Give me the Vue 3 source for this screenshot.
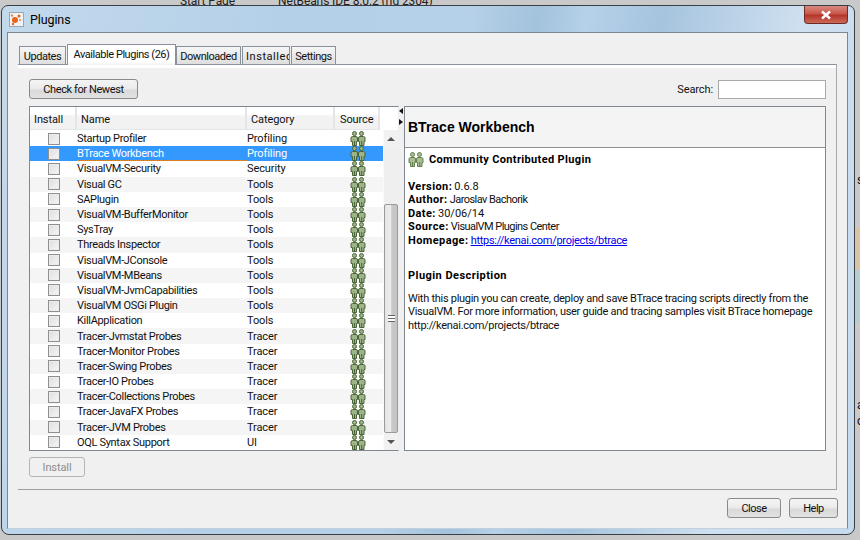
<script setup>
const tabs = [
  { label: 'Updates', width: 47 },
  { label: 'Available Plugins (26)', width: 109, active: true },
  { label: 'Downloaded', width: 65 },
  { label: 'Installed', width: 48, clip: true },
  { label: 'Settings', width: 45 }
]

const plugins = [
  ['Startup Profiler', 'Profiling'],
  ['BTrace Workbench', 'Profiling'],
  ['VisualVM-Security', 'Security'],
  ['Visual GC', 'Tools'],
  ['SAPlugin', 'Tools'],
  ['VisualVM-BufferMonitor', 'Tools'],
  ['SysTray', 'Tools'],
  ['Threads Inspector', 'Tools'],
  ['VisualVM-JConsole', 'Tools'],
  ['VisualVM-MBeans', 'Tools'],
  ['VisualVM-JvmCapabilities', 'Tools'],
  ['VisualVM OSGi Plugin', 'Tools'],
  ['KillApplication', 'Tools'],
  ['Tracer-Jvmstat Probes', 'Tracer'],
  ['Tracer-Monitor Probes', 'Tracer'],
  ['Tracer-Swing Probes', 'Tracer'],
  ['Tracer-IO Probes', 'Tracer'],
  ['Tracer-Collections Probes', 'Tracer'],
  ['Tracer-JavaFX Probes', 'Tracer'],
  ['Tracer-JVM Probes', 'Tracer'],
  ['OQL Syntax Support', 'UI']
]
const SELECTED = 1
</script>

<template>
  <div class="desktop">
    <div class="behind">
      <span class="behind-a">Start Page</span>
      <span class="behind-b">NetBeans IDE 8.0.2 (rid 2304)</span>
      <span class="side s1">s</span>
      <span class="side s2">a</span>
      <span class="side s3">o</span>
      <i class="patch tan"></i>
      <i class="patch blue"></i>
    </div>
    <div class="window">
      <div class="titlebar">
        <svg class="app-icon" width="15" height="15" viewBox="0 0 15 15">
          <rect x="0.5" y="0.5" width="14" height="14" fill="#eef2f5" stroke="#9aa7b3" />
          <circle cx="6" cy="8" r="3" fill="#e8641b" />
          <circle cx="10" cy="4" r="1.5" fill="#e8641b" />
          <circle cx="3" cy="3.5" r="1.2" fill="#eb8a4d" />
          <circle cx="4" cy="12" r="1.2" fill="#e8641b" />
          <circle cx="11" cy="8" r="1" fill="#eb8a4d" />
        </svg>
        <span class="title">Plugins</span>
        <div class="close-x">
          <svg width="12" height="10" viewBox="0 0 12 10">
            <path d="M2 1.5 L10 8.5 M10 1.5 L2 8.5" stroke="#fff" stroke-width="2.4" />
          </svg>
        </div>
      </div>

      <div class="client">
        <div class="tabs">
          <div
            v-for="tab in tabs"
            :key="tab.label"
            class="tab"
            :class="{ active: tab.active, clip: tab.clip }"
            :style="{ width: tab.width + 'px' }"
          >{{ tab.label }}</div>
        </div>

        <div class="tab-panel">
          <div class="toolbar">
            <button class="btn newest">Check for Newest</button>
            <div class="search">
              <span>Search:</span>
              <div class="search-box"></div>
            </div>
          </div>

          <div class="split">
            <div class="table">
              <div class="table-head">
                <div class="th th-install">Install</div>
                <div class="th th-name">Name</div>
                <div class="th th-cat">Category</div>
                <div class="th th-src">Source</div>
              </div>
              <div class="table-body">
                <div class="rows">
                  <div
                    v-for="(p, i) in plugins"
                    :key="p[0]"
                    class="row"
                    :class="{ selected: i === SELECTED }"
                  >
                    <div class="td-install"><span class="check"></span></div>
                    <div class="td-name">{{ p[0] }}</div>
                    <div class="td-cat">{{ p[1] }}</div>
                    <div class="td-src">
                      <svg width="16" height="15" viewBox="0 0 16 15">
                        <g fill="#9db38a" stroke="#4a6636" stroke-width="1">
                          <circle cx="4.5" cy="2.5" r="2" />
                          <path d="M1 7 Q1 5.5 2.5 5.5 H6 Q7.5 5.5 7.5 7 V10.5 H6.5 V14.5 H2.5 V10.5 H1 Z" />
                          <path d="M4.5 10 V14.5" fill="none" />
                          <circle cx="11.5" cy="2.5" r="2" />
                          <path d="M8.5 7 Q8.5 5.5 10 5.5 H13.5 Q15 5.5 15 7 V10.5 H14 V14.5 H9.5 V10.5 H8.5 Z" />
                          <path d="M11.7 10 V14.5" fill="none" />
                        </g>
                      </svg>
                    </div>
                  </div>
                </div>
                <div class="scrollbar">
                  <div class="arrow up"></div>
                  <div class="track">
                    <div class="thumb"><span class="grip"></span></div>
                  </div>
                  <div class="arrow down"></div>
                </div>
              </div>
            </div>

            <div class="divider">
              <span class="tri left"></span>
              <span class="tri right"></span>
            </div>

            <div class="detail">
              <div class="detail-head">BTrace Workbench</div>
              <div class="detail-body">
                <div class="community">
                  <svg width="16" height="15" viewBox="0 0 16 15">
                    <g fill="#a9bd96" stroke="#64804d" stroke-width="1">
                      <circle cx="4.5" cy="2.5" r="2" />
                      <path d="M1 7 Q1 5.5 2.5 5.5 H6 Q7.5 5.5 7.5 7 V10.5 H6.5 V14.5 H2.5 V10.5 H1 Z" />
                      <path d="M4.5 10 V14.5" fill="none" />
                      <circle cx="11.5" cy="2.5" r="2" />
                      <path d="M8.5 7 Q8.5 5.5 10 5.5 H13.5 Q15 5.5 15 7 V10.5 H14 V14.5 H9.5 V10.5 H8.5 Z" />
                      <path d="M11.7 10 V14.5" fill="none" />
                    </g>
                  </svg>
                  <b>Community Contributed Plugin</b>
                </div>
                <div class="meta">
                  <div><b>Version:</b> <span class="num">0.6.8</span></div>
                  <div><b>Author:</b> Jaroslav Bachorik</div>
                  <div><b>Date:</b> <span class="num">30/06/14</span></div>
                  <div><b>Source:</b> VisualVM Plugins Center</div>
                  <div><b>Homepage:</b> <a class="link">https://kenai.com/projects/btrace</a></div>
                </div>
                <div class="desc-title">Plugin Description</div>
                <p class="desc">With this plugin you can create, deploy and save BTrace tracing scripts directly from the<br>VisualVM. For more information, user guide and tracing samples visit BTrace homepage<br>http://kenai.com/projects/btrace</p>
              </div>
            </div>
          </div>

          <div class="install-line">
            <button class="btn install" disabled>Install</button>
          </div>
        </div>

        <div class="footer">
          <button class="btn foot">Close</button>
          <button class="btn foot">Help</button>
        </div>
      </div>
    </div>
  </div>
</template>

<style scoped>
.desktop {
  position: relative;
  width: 860px;
  height: 540px;
  box-sizing: border-box;
  padding: 5px 5px 5px 1px;
  overflow: hidden;
  background: #c9c9c9;
  font-family: Roboto, "Liberation Sans", Arial, sans-serif;
  font-size: 11px;
  letter-spacing: -0.1px;
  color: #111;
}

.behind {
  position: absolute;
  left: 0;
  top: -6px;
  font-size: 12px;
  color: #222;
}

.behind-a {
  position: absolute;
  left: 180px;
  white-space: nowrap;
}

.behind-b {
  position: absolute;
  left: 278px;
  white-space: nowrap;
}

.side {
  position: absolute;
  left: 857px;
  color: #111;
}

.s1 { top: 179px; }
.s2 { top: 404px; }
.s3 { top: 420px; }

.patch {
  position: absolute;
  left: 856px;
  width: 4px;
}

.tan {
  top: 233px;
  height: 43px;
  background: #d8c4a6;
}

.blue {
  top: 276px;
  height: 53px;
  background: #b7cdd3;
}

.window {
  position: relative;
  height: 530px;
  box-sizing: border-box;
  padding: 0 6px 5px 5px;
  border: 1px solid #3a3f45;
  border-radius: 7px 7px 8px 8px;
  background: linear-gradient(100deg, #c3d9ec 0%, #b4d0e8 30%, #b5d0e8 50%, #a3c2dc 57%, #b6d1ea 62%, #a6c4de 70%, #cfe0f0 85%, #c4daee 100%);
  display: flex;
  flex-direction: column;
}

.titlebar {
  height: 26px;
  flex: none;
  display: flex;
  align-items: center;
  gap: 6px;
  padding-left: 2px;
  position: relative;
}

.app-icon {
  margin-top: 1px;
}

.title {
  font-size: 12.5px;
  color: #000;
}

.close-x {
  position: absolute;
  right: 0;
  top: 0;
  width: 44px;
  height: 18px;
  box-sizing: border-box;
  border: 1px solid #6e2b25;
  border-top: none;
  border-radius: 0 0 4px 4px;
  background: linear-gradient(#d88b80 0%, #c9574a 45%, #b5362a 55%, #cb6a58 100%);
  display: flex;
  align-items: center;
  justify-content: center;
}

.client {
  flex: 1;
  box-sizing: border-box;
  background: #f0f0f0;
  border: 1px solid #7c8794;
  border-bottom-color: #c0d0de;
  padding: 11px 10px 0 10px;
  display: flex;
  flex-direction: column;
}

.tabs {
  display: flex;
  align-items: flex-end;
  height: 20px;
  flex: none;
  padding-left: 1px;
  position: relative;
  z-index: 1;
}

.tab {
  height: 18px;
  box-sizing: border-box;
  border: 1px solid #8a919b;
  border-bottom: none;
  background: linear-gradient(#f6f6f6, #dedede);
  text-align: center;
  line-height: 19px;
  letter-spacing: -0.45px;
  white-space: nowrap;
  overflow: hidden;
  margin-right: 1px;
}

.tab.clip {
  text-align: left;
  padding-left: 3px;
  letter-spacing: 0.55px;
}

.tab.active {
  height: 21px;
  line-height: 19px;
  margin-right: 0;
  margin-bottom: -1px;
  background: linear-gradient(#fff 0, #fff 85%, #f0f0f0 100%);
}

.tab-panel {
  height: 426px;
  flex: none;
  box-sizing: border-box;
  background: #f0f0f0;
  border-top: 1px solid #8a919b;
  border-right: 1px solid #a5a9ae;
  border-bottom: 1px solid #9ca0a5;
  box-shadow: inset 0 3px 0 #fff;
  padding: 14px 10px 0 11px;
  display: flex;
  flex-direction: column;
}

.toolbar {
  display: flex;
  justify-content: space-between;
  align-items: center;
  height: 20px;
  flex: none;
  margin-bottom: 7px;
}

.btn {
  font: inherit;
  letter-spacing: inherit;
  color: #111;
  box-sizing: border-box;
  border: 1px solid #8a8a8a;
  border-radius: 3px;
  background: linear-gradient(#f4f4f4 0%, #ececec 45%, #d9d9d9 60%, #e2e2e2 100%);
  padding: 0;
}

.newest {
  width: 109px;
  height: 20px;
  letter-spacing: -0.4px;
}

.search {
  display: flex;
  align-items: center;
  gap: 5px;
}

.search-box {
  width: 108px;
  height: 19px;
  box-sizing: border-box;
  background: #fff;
  border: 1px solid #a9a9a9;
}

.split {
  display: flex;
  height: 345px;
  flex: none;
}

.table {
  width: 370px;
  flex: none;
  box-sizing: border-box;
  border: 1px solid #7f8790;
  border-right: 1px solid #eee;
  background: #fff;
  display: flex;
  flex-direction: column;
}

.table-head {
  display: flex;
  height: 23px;
  flex: none;
  width: 350px;
  background: linear-gradient(#fff 0, #fff 30%, #f3f3f3 40%, #f1f1f1 100%);
}

.th {
  box-sizing: border-box;
  line-height: 25px;
  border-right: 2px solid #e3e5e8;
  border-bottom: 1px solid #e3e5e8;
}

.th-install { width: 47px; padding-left: 4px; }
.th-name { width: 170px; padding-left: 4px; }
.th-cat { width: 88px; padding-left: 4px; }
.th-src { width: 45px; padding-left: 5px; }

.table-body {
  flex: 1;
  display: flex;
  min-height: 0;
  overflow: hidden;
}

.rows {
  width: 353px;
  flex: none;
  overflow: hidden;
  padding-top: 1px;
}

.row {
  display: flex;
  align-items: center;
  height: 15.2px;
}

.row:nth-child(even) {
  background: #f5f5f5;
}

.row.selected,
.row.selected:nth-child(even) {
  background: #3399ff;
  color: #fff;
}

.td-install {
  width: 48px;
  flex: none;
  display: flex;
  justify-content: center;
}

.check {
  width: 12px;
  height: 12px;
  box-sizing: border-box;
  border: 1px solid #8f8f8f;
  background: linear-gradient(135deg, #ddd, #f7f7f7);
  box-shadow: inset 0 0 0 1px #ececec;
}

.td-name {
  width: 170px;
  flex: none;
  box-sizing: border-box;
  margin-left: -1px;
  white-space: nowrap;
  letter-spacing: -0.32px;
}

.selected .td-name {
  align-self: stretch;
  line-height: 15px;
  border-bottom: 1px dotted #e08a2a;
}

.td-cat {
  width: 88px;
  flex: none;
}

.td-src {
  width: 46px;
  flex: none;
  display: flex;
  justify-content: center;
  height: 15px;
}

.scrollbar {
  flex: 1;
  background: #f1f1f1;
  display: flex;
  flex-direction: column;
  border-left: 1px solid #fafafa;
}

.arrow {
  height: 17px;
  flex: none;
  display: flex;
  align-items: center;
  justify-content: center;
}

.arrow::after {
  content: "";
  border-left: 4px solid transparent;
  border-right: 4px solid transparent;
}

.arrow.up::after {
  border-bottom: 4px solid #555;
}

.arrow.down::after {
  border-top: 4px solid #555;
}

.track {
  flex: 1;
  display: flex;
  flex-direction: column;
  justify-content: flex-end;
  background: #efefef;
}

.thumb {
  height: 229px;
  box-sizing: border-box;
  border: 1px solid #9a9a9a;
  border-radius: 2px;
  background: linear-gradient(90deg, #e4e4e4, #ededed 50%, #c9c9c9 55%, #c4c4c4 100%);
  display: flex;
  align-items: center;
  justify-content: center;
}

.grip {
  width: 7px;
  height: 5px;
  border-top: 1px solid #666;
  border-bottom: 1px solid #666;
  background: linear-gradient(#fff 0 40%, #666 40% 60%, #fff 60%);
}

.divider {
  width: 5px;
  flex: none;
  position: relative;
}

.tri {
  position: absolute;
  left: 0;
  width: 0;
  height: 0;
  border-top: 3px solid transparent;
  border-bottom: 3px solid transparent;
}

.tri.left {
  top: 2px;
  border-right: 4px solid #111;
}

.tri.right {
  top: 13px;
  border-left: 4px solid #111;
}

.detail {
  flex: none;
  width: 422px;
  min-width: 0;
  box-sizing: border-box;
  border: 1px solid #7f8790;
  background: #fff;
  display: flex;
  flex-direction: column;
}

.detail-head {
  height: 41px;
  flex: none;
  box-sizing: border-box;
  background: #f4f4f4;
  border-bottom: 1px solid #8a8f96;
  padding-left: 3px;
  line-height: 40px;
  font-family: "Liberation Sans", Arial, sans-serif;
  font-size: 14px;
  font-weight: 700;
  letter-spacing: 0;
  color: #000;
}

.detail-body {
  padding: 1px 3px;
}

.community {
  display: flex;
  align-items: center;
  gap: 5px;
  height: 20px;
  color: #000;
  letter-spacing: 0.35px;
}

.meta {
  margin-top: 11px;
  line-height: 13.4px;
  letter-spacing: -0.55px;
}

.meta b {
  letter-spacing: 0.4px;
  color: #000;
}

.num {
  letter-spacing: 0;
}

.link {
  color: #0000ee;
  text-decoration: underline;
  letter-spacing: -0.28px;
}

.desc-title {
  font-weight: 700;
  margin-top: 22px;
  line-height: 14px;
  letter-spacing: 0.45px;
  color: #000;
}

.desc {
  margin: 9px 0 0;
  line-height: 13.4px;
  white-space: nowrap;
  letter-spacing: -0.28px;
}

.install-line {
  flex: none;
  padding-top: 6px;
}

.install {
  width: 56px;
  height: 20px;
  color: #8d8d8d;
  background: #f0f0f0;
  border-color: #b5b5b5;
}

.footer {
  flex: 1;
  display: flex;
  justify-content: flex-end;
  gap: 8px;
  padding-top: 8px;
  margin-right: -1px;
}

.foot {
  width: 54px;
  height: 20px;
  letter-spacing: -0.5px;
}

.foot:last-child {
  width: 49px;
}
</style>

<style>
html, body {
  margin: 0;
  overflow: hidden;
}
</style>
